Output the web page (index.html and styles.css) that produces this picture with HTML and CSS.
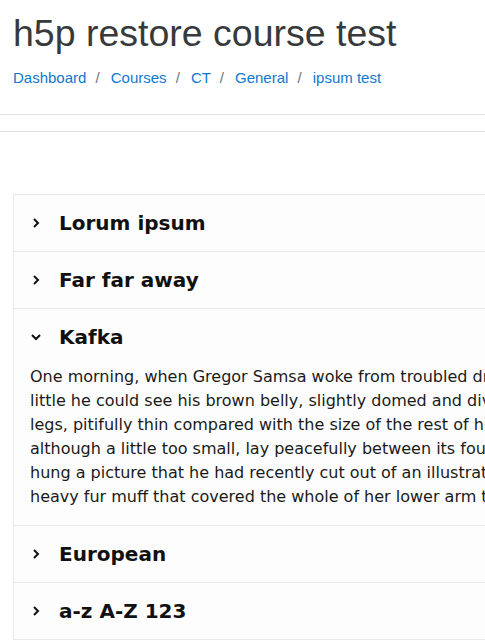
FILE: index.html
```
<!DOCTYPE html>
<html lang="en">

<head>
    <meta charset="utf-8">
    <meta name="viewport" content="width=device-width, initial-scale=1.0">
    <title>h5p restore course test</title>

    <link rel="stylesheet" href="styles.css">
</head>

<body>

    <header class="sidehoved">
        <h1>h5p restore course test</h1>
        <nav class="brodkrumme">
            <a href="#">Dashboard</a>
            <a href="#">Courses</a>
            <a href="#">CT</a>
            <a href="#">General</a>
            <a href="#">ipsum test</a>
        </nav>
    </header>

    <div class="streg"></div>

    <main>
        <section class="accordion">

            <div class="panel">
                <h2 class="titel">
                    <svg class="pil" viewBox="0 0 12 12"><polyline points="4,2 8,6 4,10" /></svg>
                    Lorum ipsum
                </h2>
            </div>

            <div class="panel">
                <h2 class="titel">
                    <svg class="pil" viewBox="0 0 12 12"><polyline points="4,2 8,6 4,10" /></svg>
                    Far far away
                </h2>
            </div>

            <div class="panel aaben">
                <h2 class="titel">
                    <svg class="pil" viewBox="0 0 12 12"><polyline points="4,2 8,6 4,10" /></svg>
                    Kafka
                </h2>
                <p class="tekst">One morning, when Gregor Samsa woke from troubled dreams, he found himself transformed in his bed into a horrible vermin. He lay on his armour-like back, and if he lifted his head a<br>little he could see his brown belly, slightly domed and divided by arches into stiff sections. The bedding was hardly able to cover it and seemed ready to slide off any moment. His many<br>legs, pitifully thin compared with the size of the rest of him, waved about helplessly as he looked. "What's happened to me?" he thought. It wasn't a dream. His room, a proper human room<br>although a little too small, lay peacefully between its four familiar walls. A collection of textile samples lay spread out on the table - Samsa was a travelling salesman - and above it there<br>hung a picture that he had recently cut out of an illustrated magazine and housed in a nice, gilded frame. It showed a lady fitted out with a fur hat and fur boa who sat upright, raising a<br>heavy fur muff that covered the whole of her lower arm towards the viewer.</p>
            </div>

            <div class="panel">
                <h2 class="titel">
                    <svg class="pil" viewBox="0 0 12 12"><polyline points="4,2 8,6 4,10" /></svg>
                    European
                </h2>
            </div>

            <div class="panel">
                <h2 class="titel">
                    <svg class="pil" viewBox="0 0 12 12"><polyline points="4,2 8,6 4,10" /></svg>
                    a-z A-Z 123
                </h2>
            </div>

        </section>
    </main>

</body>

</html>
```

FILE: styles.css
```
body {
    box-sizing: border-box;
    background-color: white;
    margin: 0;
    padding: 0;
    overflow: hidden;
    font-family: "Liberation Sans", Arial, sans-serif;
    color: #373a3c;
}

/*Sidehoved*/

.sidehoved {
    padding: 0 13px 24px;
    border-bottom: 1px solid #dee2e6;
}

.sidehoved h1 {
    font-size: 37.5px;
    font-weight: 300;
    line-height: 1.2;
    margin: 11px 0 11px;
}

.brodkrumme {
    font-size: 15px;
    line-height: 1.5;
    white-space: nowrap;
}

.brodkrumme a {
    color: #1177d1;
    text-decoration: none;
}

.brodkrumme a + a::before {
    content: "/";
    color: #6c757d;
    padding: 0 11px 0 5px;
}

.streg {
    margin-top: 16px;
    border-top: 1px solid #dee2e6;
}

/*Accordion*/

main {
    padding: 62px 0 0 13px;
}

.accordion {
    width: 1600px;
    font-family: "DejaVu Sans", sans-serif;
    color: #000;
    background-color: #fdfdfd;
    border: 1px solid #eaeaea;
}

.panel + .panel {
    border-top: 1px solid #eaeaea;
}

.titel {
    display: flex;
    align-items: center;
    height: 56px;
    margin: 0;
    padding-left: 16px;
    font-size: 20px;
    font-weight: bold;
    color: #111;
}

.pil {
    width: 12px;
    height: 12px;
    margin-right: 17px;
    fill: none;
    stroke: #111;
    stroke-width: 2;
}

.aaben .pil {
    transform: rotate(90deg);
}

.tekst {
    margin: 0;
    padding: 0 16px 16px;
    font-size: 16px;
    line-height: 24px;
    white-space: nowrap;
    color: #1a1a1a;
}
```
